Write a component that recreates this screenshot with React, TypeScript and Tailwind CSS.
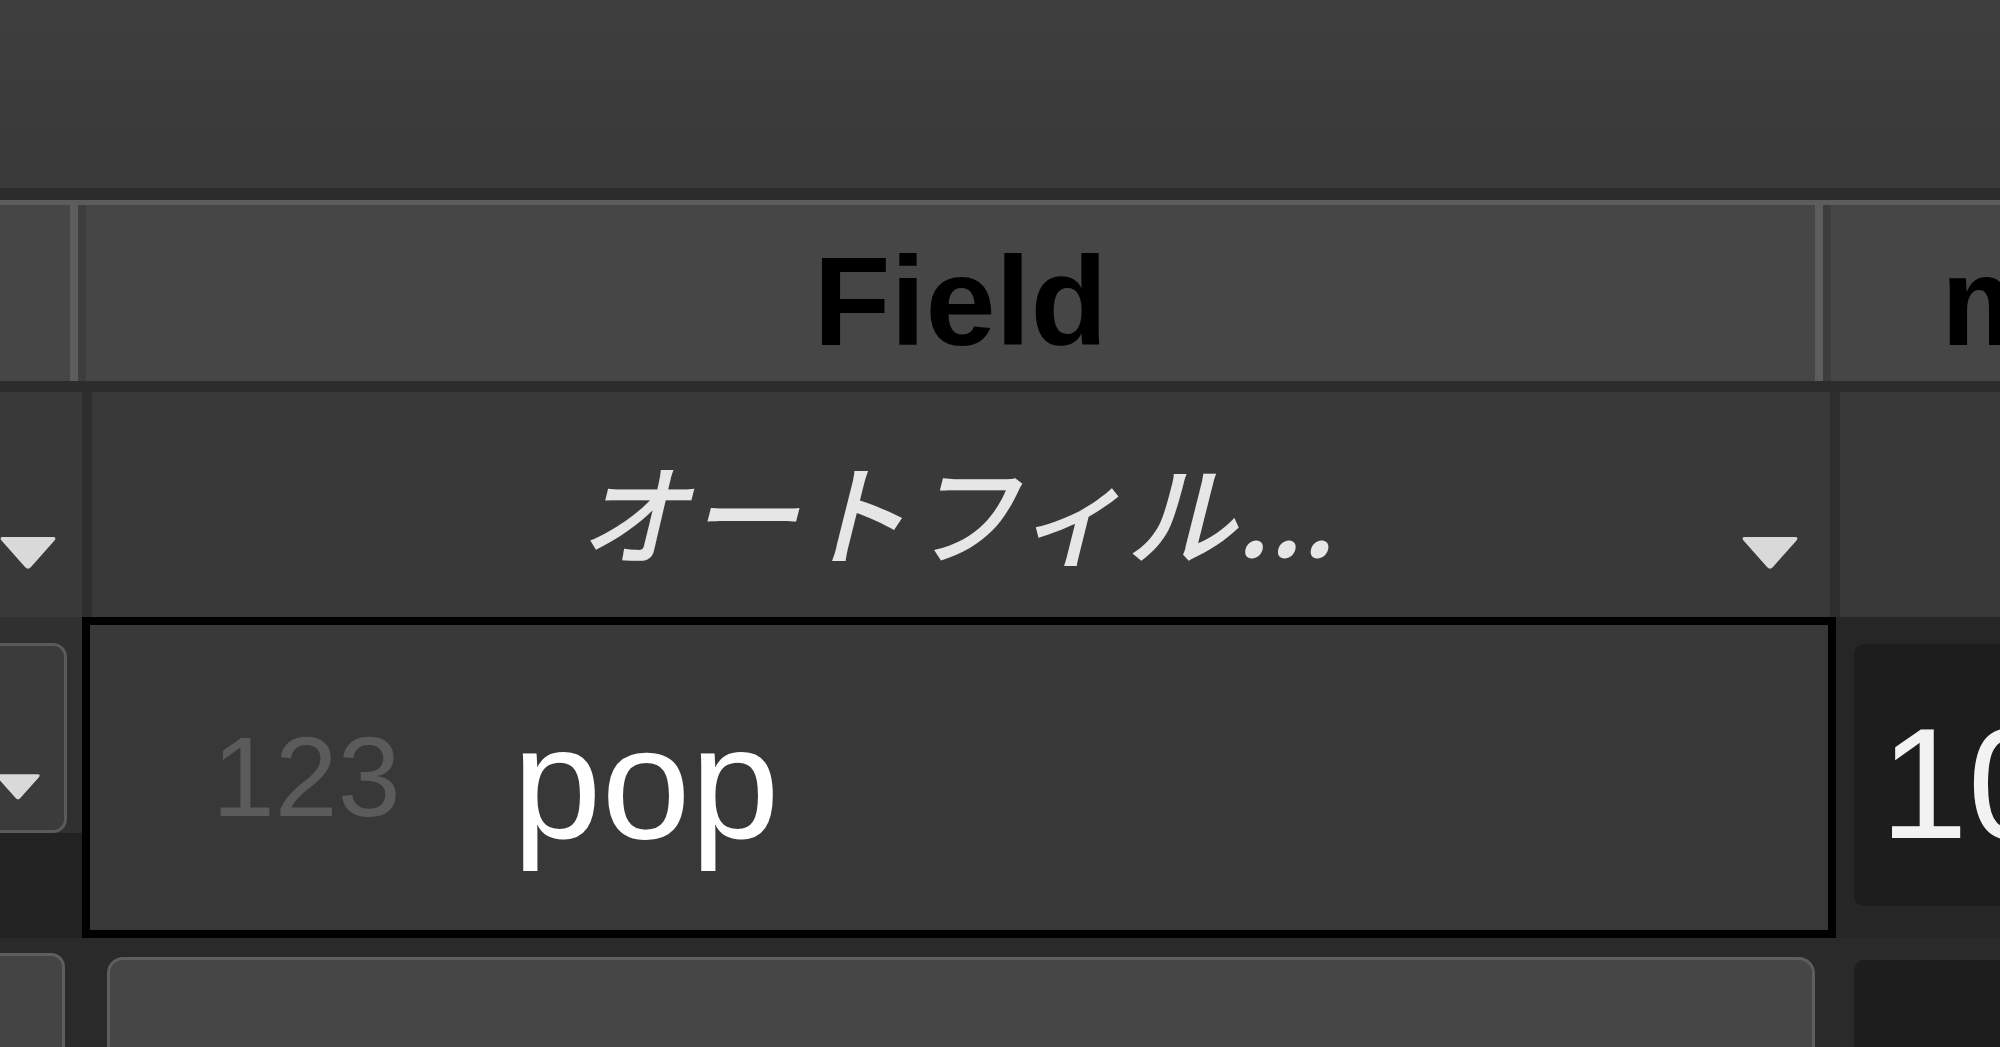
import React from "react";

function Caret({ className }: { className?: string }) {
  return (
    <svg viewBox="0 0 60 38" className={className} fill="#d9d9d9">
      <path d="M5 3 H55 Q59 3 56.5 6.5 L33 33 Q30 36.5 27 33 L3.5 6.5 Q1 3 5 3 Z" />
    </svg>
  );
}

export default function App() {
  return (
    <div className="w-[2000px] h-[1047px] overflow-hidden bg-[#3a3a3a] font-['Liberation_Sans',Arial,sans-serif]">
      {/* toolbar strip */}
      <div className="h-[188px] bg-gradient-to-b from-[#3e3e3e] to-[#393939]" />
      <div className="h-[12px] bg-[#2c2c2c]" />

      {/* column headers */}
      <div className="flex h-[181px] border-t-[5px] border-[#5d5d5d] bg-[#464646]">
        <div className="w-[70px] shrink-0" />
        <div className="w-[8px] shrink-0 bg-[#5d5d5d]" />
        <div className="w-[8px] shrink-0 bg-[#3d3d3d]" />
        <div className="w-[1729px] shrink-0 flex items-center justify-center pl-[20px] pt-[18px] text-[126px] font-bold text-black leading-none">
          Field
        </div>
        <div className="w-[8px] shrink-0 bg-[#5d5d5d]" />
        <div className="w-[8px] shrink-0 bg-[#3d3d3d]" />
        <div className="flex-1 min-w-0 overflow-hidden whitespace-nowrap flex items-center pl-[110px] pt-[18px] text-[126px] font-bold text-black leading-none">
          mean
        </div>
      </div>
      <div className="h-[11px] bg-[#2c2c2c]" />

      {/* filter row */}
      <div className="flex h-[225px] bg-[#393939]">
        <div className="w-[82px] shrink-0 overflow-hidden flex items-end justify-end pr-[24px] pb-[45px]">
          <Caret className="w-[60px] h-[38px] shrink-0" />
        </div>
        <div className="w-[10px] shrink-0 bg-[#2d2d2d]" />
        <div className="w-[1738px] shrink-0 grid grid-cols-[1fr_auto_1fr]">
          <div />
          <div className="self-center pt-[8px] pr-[10px] italic font-medium text-[110px] leading-none text-[#e6e6e6] font-['Noto_Sans_CJK_JP','Noto_Sans',sans-serif] whitespace-nowrap">
            オートフィル...
          </div>
          <div className="flex items-end justify-end pr-[30px] pb-[45px]">
            <Caret className="w-[60px] h-[38px]" />
          </div>
        </div>
        <div className="w-[10px] shrink-0 bg-[#2d2d2d]" />
        <div className="flex-1 min-w-0" />
      </div>

      {/* selected record row */}
      <div className="flex h-[321px]">
        <div className="w-[82px] shrink-0 flex flex-col bg-[#303030] overflow-hidden">
          <div className="h-[26px] shrink-0" />
          <div className="h-[190px] w-[87px] shrink-0 -ml-[20px] rounded-[14px] border-[3px] border-[#5a5a5a] bg-[#3b3b3b] flex items-end justify-end pr-[20px] pb-[28px]">
            <Caret className="w-[52px] h-[30px] shrink-0" />
          </div>
          <div className="flex-1 bg-[#222222]" />
        </div>
        <div className="w-[1754px] shrink-0 border-[8px] border-black bg-[#383838] flex items-center pl-[122px]">
          <span className="text-[113px] text-[#5b5b5b] leading-none">123</span>
          <span className="ml-[112px] text-[160px] text-white leading-none pt-[10px]">pop</span>
        </div>
        <div className="flex-1 min-w-0 bg-[#262626] pt-[27px] pb-[32px] pl-[18px]">
          <div className="h-full bg-[#1d1d1d] rounded-l-[10px] flex items-center pl-[26px] pt-[16px] overflow-hidden whitespace-nowrap">
            <span className="text-[158px] text-[#f2f2f2] leading-none">10</span>
          </div>
        </div>
      </div>

      {/* next record row */}
      <div className="flex h-[109px] bg-[#2a2a2a]">
        <div className="w-[82px] shrink-0 overflow-hidden pt-[15px]">
          <div className="h-[140px] w-[85px] -ml-[20px] rounded-[14px] border-[3px] border-[#5e5e5e] bg-[#444444]" />
        </div>
        <div className="w-[1754px] shrink-0 pt-[19px] pl-[25px] pr-[21px]">
          <div className="h-[140px] rounded-[16px] border-[3px] border-[#5e5e5e] bg-[#464646]" />
        </div>
        <div className="flex-1 min-w-0 pt-[22px] pl-[18px]">
          <div className="h-[140px] bg-[#1d1d1d] rounded-l-[10px] pl-[26px] pt-[73px] overflow-hidden whitespace-nowrap">
            <span className="text-[158px] text-[#f2f2f2] leading-none">10</span>
          </div>
        </div>
      </div>
    </div>
  );
}
